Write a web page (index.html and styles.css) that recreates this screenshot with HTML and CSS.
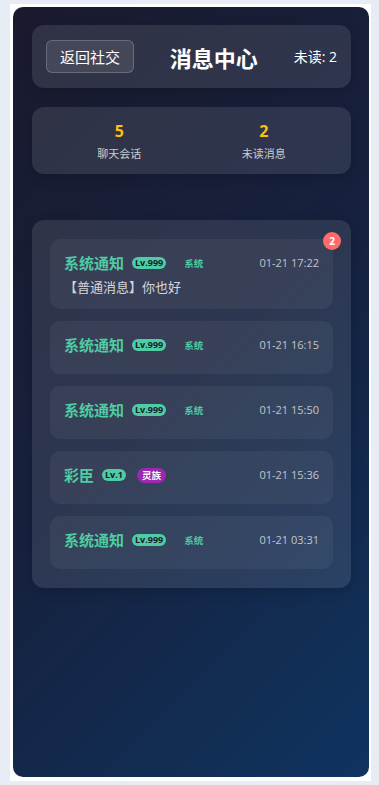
FILE: index.html
```html
<!DOCTYPE html>
<html lang="zh">
<head>
<meta charset="utf-8">
<title>消息中心</title>
<link rel="stylesheet" href="styles.css">
</head>
<body>
<div class="frame">
  <div class="card">
    <div class="panel header">
      <button class="back">返回社交</button>
      <div class="title">消息中心</div>
      <div class="unread">未读: 2</div>
    </div>
    <div class="panel stats">
      <div class="stat"><div class="num">5</div><div class="label">聊天会话</div></div>
      <div class="stat"><div class="num">2</div><div class="label">未读消息</div></div>
    </div>
    <div class="panel list">
      <div class="item">
        <div class="row"><span class="name">系统通知</span><span class="lv">Lv.999</span><span class="tag sys">系统</span><span class="time">01-21 17:22</span></div>
        <div class="msg">【普通消息】你也好</div>
        <span class="badge">2</span>
      </div>
      <div class="item">
        <div class="row"><span class="name">系统通知</span><span class="lv">Lv.999</span><span class="tag sys">系统</span><span class="time">01-21 16:15</span></div>
        <div class="msg"></div>
      </div>
      <div class="item">
        <div class="row"><span class="name">系统通知</span><span class="lv">Lv.999</span><span class="tag sys">系统</span><span class="time">01-21 15:50</span></div>
        <div class="msg"></div>
      </div>
      <div class="item">
        <div class="row"><span class="name">彩臣</span><span class="lv">Lv.1</span><span class="tag race">灵族</span><span class="time">01-21 15:36</span></div>
        <div class="msg"></div>
      </div>
      <div class="item">
        <div class="row"><span class="name">系统通知</span><span class="lv">Lv.999</span><span class="tag sys">系统</span><span class="time">01-21 03:31</span></div>
        <div class="msg"></div>
      </div>
    </div>
  </div>
</div>
</body>
</html>
```
FILE: styles.css
```css
* { box-sizing: border-box; }
html, body { margin: 0; padding: 0; }
body {
  background: #e8edf5;
  font-family: "Open Sans", "Noto Sans CJK SC", sans-serif;
  width: 379px;
  height: 785px;
  overflow: hidden;
}
.frame {
  margin: 4px 0 0 10px;
  width: 361px;
  height: 777px;
  background: #fff;
  padding: 3px 2px 4px 3px;
}
.card {
  height: 100%;
  border-radius: 10px;
  background: linear-gradient(135deg, #1a1a2e 0%, #16213e 50%, #0f3460 100%);
  padding: 18px 18px 18px 19px;
}
.panel {
  background: rgba(255, 255, 255, 0.1);
  border-radius: 12px;
  box-shadow: 0 4px 12px rgba(0, 0, 0, 0.15);
}
.header {
  display: flex;
  align-items: center;
  justify-content: space-between;
  padding: 15px 14px;
}
.back {
  font-family: "Noto Sans CJK SC", sans-serif;
  font-size: 15px;
  line-height: 17px;
  color: #fff;
  background: rgba(255, 255, 255, 0.1);
  border: 1px solid rgba(255, 255, 255, 0.2);
  border-radius: 6px;
  padding: 7px 13px;
  margin: 0;
}
.title {
  font-family: "Noto Sans CJK SC", sans-serif;
  font-size: 22px;
  font-weight: bold;
  color: #fff;
  line-height: 28px;
}
.unread {
  font-size: 14px;
  color: #fff;
  line-height: 20px;
}
.stats {
  margin-top: 19px;
  padding: 13px 15px;
  display: flex;
  justify-content: space-around;
}
.stat { text-align: center; }
.num {
  font-size: 16px;
  font-weight: bold;
  color: #ffc107;
  line-height: 22px;
  margin-bottom: 4px;
}
.label {
  font-family: "Noto Sans CJK SC", sans-serif;
  font-size: 11px;
  line-height: 15px;
  color: rgba(255, 255, 255, 0.75);
}
.list {
  margin-top: 46px;
  padding: 19px 18px;
  display: flex;
  flex-direction: column;
  gap: 12px;
}
.item {
  position: relative;
  background: rgba(255, 255, 255, 0.05);
  border-radius: 10px;
  padding: 14px;
}
.row {
  display: flex;
  align-items: center;
  height: 20px;
  margin-bottom: 5px;
}
.name {
  font-family: "Noto Sans CJK SC", sans-serif;
  font-size: 15px;
  font-weight: bold;
  color: #4ecca3;
  line-height: 20px;
}
.lv {
  margin-left: 8px;
  background: #4ecca3;
  color: #1a1a2e;
  font-size: 9px;
  font-weight: 700;
  height: 12px;
  line-height: 12px;
  padding: 0 3px;
  border-radius: 6px;
}
.tag {
  margin-left: 11px;
  font-family: "Noto Sans CJK SC", sans-serif;
  font-size: 9.5px;
  font-weight: bold;
  height: 15px;
  line-height: 15px;
  padding: 0 5px;
  border-radius: 8px;
}
.tag.sys {
  margin-left: 13px;
  color: #4ecca3;
  background: transparent;
}
.tag.race {
  color: #fff;
  background: #9c27b0;
}
.time {
  margin-left: auto;
  font-size: 11px;
  color: rgba(255, 255, 255, 0.7);
  line-height: 16px;
}
.msg {
  font-family: "Noto Sans CJK SC", sans-serif;
  font-size: 13px;
  line-height: 17px;
  color: rgba(255, 255, 255, 0.8);
}
.badge {
  position: absolute;
  top: -7px;
  right: -8px;
  width: 18px;
  height: 18px;
  border-radius: 50%;
  background: #ff6b6b;
  color: #fff;
  font-size: 10px;
  font-weight: bold;
  line-height: 18px;
  text-align: center;
}
```
